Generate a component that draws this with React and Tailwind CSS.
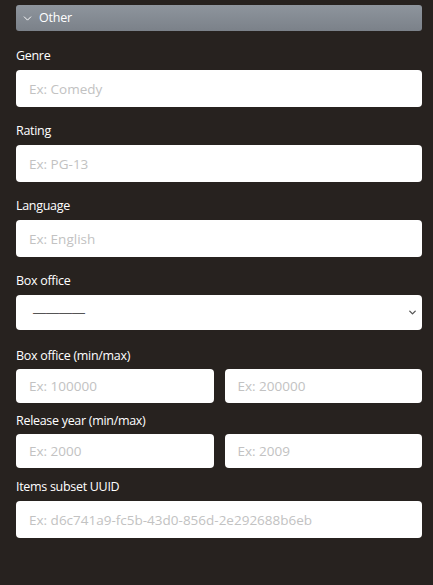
import { ChevronDown } from 'lucide-react';

const TextField = ({ label, placeholder }) => (
    <div className="flex flex-col">
        <label className="text-[12.5px] leading-[18px] tracking-[-0.3px] text-white mb-[5px]">{label}</label>
        <input
            type="text"
            placeholder={placeholder}
            className="h-[37px] w-full rounded-[4px] bg-white px-[13px] text-[13.5px] text-zinc-800 placeholder:text-[#c2c2c2] outline-none"
        />
    </div>
);

const RangeField = ({ label, minPlaceholder, maxPlaceholder }) => (
    <div className="flex flex-col">
        <label className="text-[12.5px] leading-[18px] tracking-[-0.3px] text-white mb-[4px]">{label}</label>
        <div className="grid grid-cols-2 gap-[11px]">
            <input
                type="text"
                placeholder={minPlaceholder}
                className="h-[34px] w-full rounded-[4px] bg-white px-[13px] text-[13.5px] text-zinc-800 placeholder:text-[#c2c2c2] outline-none"
            />
            <input
                type="text"
                placeholder={maxPlaceholder}
                className="h-[34px] w-full rounded-[4px] bg-white px-[13px] text-[13.5px] text-zinc-800 placeholder:text-[#c2c2c2] outline-none"
            />
        </div>
    </div>
);

export default function App() {
    return (
        <div className="min-h-[585px] w-full bg-[#27221f] pl-4 pr-[11px] pt-[5px] pb-10" style={{ fontFamily: '"Open Sans", "Noto Sans", sans-serif' }}>
            {/* Section header */}
            <div className="flex h-[26px] items-center gap-[5px] rounded-[3px] bg-gradient-to-b from-[#8e959d] to-[#7b8189] px-[5px]">
                <ChevronDown className="h-[13px] w-[13px] text-white" strokeWidth={1.75} />
                <span className="text-[12.5px] leading-none tracking-[-0.2px] text-white">Other</span>
            </div>

            <div className="mt-[16px] flex flex-col">
                <TextField label="Genre" placeholder="Ex: Comedy" />
                <div className="mt-[15px]">
                    <TextField label="Rating" placeholder="Ex: PG-13" />
                </div>
                <div className="mt-[15px]">
                    <TextField label="Language" placeholder="Ex: English" />
                </div>

                <div className="mt-[15px] flex flex-col">
                    <label className="text-[12.5px] leading-[18px] tracking-[-0.3px] text-white mb-[5px]">Box office</label>
                    <div className="relative flex h-[35px] w-full items-center rounded-[4px] bg-white pl-[17px] pr-[4px]">
                        <span className="text-[13px] text-[#555]" style={{ fontFamily: '"Liberation Sans", sans-serif' }}>————</span>
                        <ChevronDown className="ml-auto h-[11px] w-[11px] text-[#555]" strokeWidth={3} />
                    </div>
                </div>

                <div className="mt-[17px]">
                    <RangeField label="Box office (min/max)" minPlaceholder="Ex: 100000" maxPlaceholder="Ex: 200000" />
                </div>
                <div className="mt-[9px]">
                    <RangeField label="Release year (min/max)" minPlaceholder="Ex: 2000" maxPlaceholder="Ex: 2009" />
                </div>
                <div className="mt-[10px]">
                    <TextField label="Items subset UUID" placeholder="Ex: d6c741a9-fc5b-43d0-856d-2e292688b6eb" />
                </div>
            </div>
        </div>
    );
}
